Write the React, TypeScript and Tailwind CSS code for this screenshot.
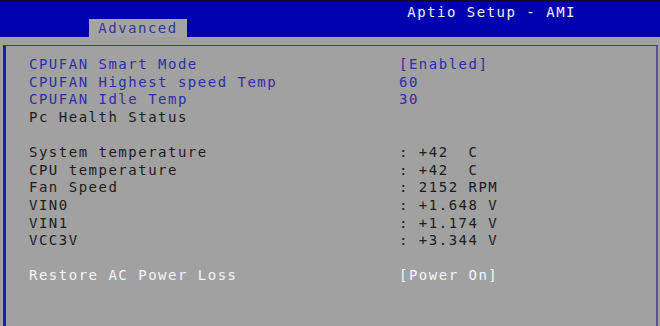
import React from "react";

type Row = { label: string; value?: string; tone: "blue" | "dark" | "white" } | null;

const rows: Row[] = [
  { label: "CPUFAN Smart Mode", value: "[Enabled]", tone: "blue" },
  { label: "CPUFAN Highest speed Temp", value: "60", tone: "blue" },
  { label: "CPUFAN Idle Temp", value: "30", tone: "blue" },
  { label: "Pc Health Status", tone: "dark" },
  null,
  { label: "System temperature", value: ": +42  C", tone: "dark" },
  { label: "CPU temperature", value: ": +42  C", tone: "dark" },
  { label: "Fan Speed", value: ": 2152 RPM", tone: "dark" },
  { label: "VIN0", value: ": +1.648 V", tone: "dark" },
  { label: "VIN1", value: ": +1.174 V", tone: "dark" },
  { label: "VCC3V", value: ": +3.344 V", tone: "dark" },
  null,
  { label: "Restore AC Power Loss", value: "[Power On]", tone: "white" },
];

const toneClass = {
  blue: "text-[#2e2ea6]",
  dark: "text-[#1c1c1c]",
  white: "text-[#f5f5f5]",
};

export default function App() {
  return (
    <div
      className="w-[660px] h-[326px] overflow-hidden bg-[#a1a1a1] flex flex-col text-[14px] tracking-[1.5px]"
      style={{ fontFamily: '"DejaVu Sans Mono", "Liberation Mono", monospace' }}
    >
      {/* top bar */}
      <div className="h-[37px] shrink-0 bg-[#0000ae] border-t-2 border-[#101020] flex">
        <div className="ml-[89px] mt-auto h-[18px] w-[98px] bg-[#a4a4a4] flex items-center justify-center text-[#35359a] leading-none">
          Advanced
        </div>
        <div className="ml-auto mr-[84px] mt-[3px] text-[#f2f2f2] leading-none whitespace-pre">
          Aptio Setup - AMI
        </div>
      </div>

      {/* main panel */}
      <div className="mt-[8px] ml-[3px] mr-[2px] flex-1 border-l-[3px] border-l-[#1e1ea8] border-t border-t-[#3a3a9a] border-r-2 border-r-[#5c4ca6]">
        <div className="pt-[10px] pl-[23px] flex flex-col">
          {rows.map((r, i) =>
            r === null ? (
              <div key={i} className="h-[17.6px]" />
            ) : (
              <div key={i} className={`flex h-[17.6px] items-center whitespace-pre ${toneClass[r.tone]}`}>
                <span className="w-[370px] shrink-0">{r.label}</span>
                {r.value && <span>{r.value}</span>}
              </div>
            )
          )}
        </div>
      </div>
    </div>
  );
}
